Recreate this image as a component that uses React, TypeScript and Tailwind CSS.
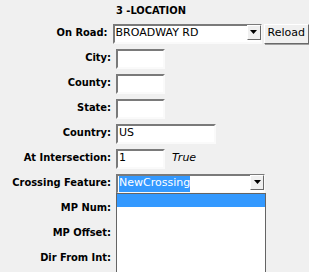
import React from "react";

const font = { fontFamily: "Tahoma, 'DejaVu Sans', sans-serif" };
const bold = { fontFamily: "'DejaVu Sans Condensed', 'DejaVu Sans', sans-serif" };

function Sunken({ w, children, className = "" }: { w: string; children?: React.ReactNode; className?: string }) {
  return (
    <div
      className={`${w} h-[20px] bg-white border-2 border-t-[#7a7a7a] border-l-[#7a7a7a] border-b-[#fafafa] border-r-[#fafafa] flex items-center pl-[1px] text-[11px] text-black overflow-hidden whitespace-nowrap ${className}`}
    >
      {children}
    </div>
  );
}

function Arrow() {
  return (
    <div className="absolute right-[1px] top-[1px] w-[14px] h-[15px] bg-[#f0f0f0] border border-t-[#fff] border-l-[#fff] border-b-[#696969] border-r-[#696969] flex items-center justify-center">
      <svg width="7" height="4" viewBox="0 0 7 4">
        <polygon points="0,0 7,0 3.5,4" fill="#000" />
      </svg>
    </div>
  );
}

function Row({ label, children }: { label: string; children?: React.ReactNode }) {
  return (
    <div className="flex items-center h-[25px]">
      <div className="w-[116px] text-right font-bold text-[11px] text-black pr-[5px] whitespace-nowrap" style={bold}>
        {label}
      </div>
      <div className="flex items-center">{children}</div>
    </div>
  );
}

export default function App() {
  return (
    <div className="w-[309px] h-[272px] bg-[#f0f0f0] overflow-hidden relative" style={font}>
      <div className="h-[21px] pl-[116px] pt-[3px] font-bold text-[11px] text-black" style={bold}>
        3 -LOCATION
      </div>
      <Row label="On Road:">
        <div className="relative">
          <Sunken w="w-[149px]">BROADWAY RD</Sunken>
          <Arrow />
        </div>
        <div className="ml-[2px] h-[20px] px-[3px] bg-[#f0f0f0] border border-t-[#fff] border-l-[#fff] border-b-[#696969] border-r-[#696969] text-[11px] flex items-center shadow-[1px_1px_0_#a0a0a0]">
          Reload
        </div>
      </Row>
      <Row label="City:">
        <Sunken w="w-[49px]" />
      </Row>
      <Row label="County:">
        <Sunken w="w-[49px]" />
      </Row>
      <Row label="State:">
        <Sunken w="w-[49px]" />
      </Row>
      <Row label="Country:">
        <Sunken w="w-[100px]">US</Sunken>
      </Row>
      <Row label="At Intersection:">
        <Sunken w="w-[49px]">1</Sunken>
        <span className="ml-[7px] italic text-[11px] text-black">True</span>
      </Row>
      <Row label="Crossing Feature:">
        <div className="relative">
          <Sunken w="w-[149px]">
            <span className="bg-[#3399ff] text-white">NewCrossing</span>
          </Sunken>
          <Arrow />
        </div>
      </Row>
      <Row label="MP Num:" />
      <Row label="MP Offset:" />
      <Row label="Dir From Int:" />
      <div className="absolute left-[116px] top-[193px] w-[150px] h-[90px] bg-white border border-[#646464]">
        <div className="h-[13px] bg-[#3399ff]" />
      </div>
    </div>
  );
}
